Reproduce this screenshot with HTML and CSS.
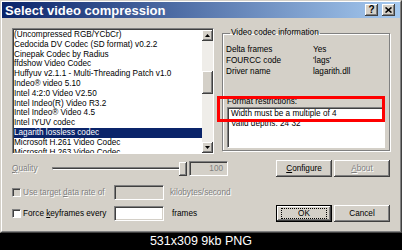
FILE: index.html
```html
<!DOCTYPE html>
<html lang="en">
<head>
  <meta charset="UTF-8" />
  <title>Select video compression</title>
  <link rel="stylesheet" href="styles.css">
</head>
<body>
  <div class="dialog">
    <div class="frame">
      <div class="titlebar">
        <span class="title">Select video compression</span>
        <span class="tbtn help">?</span>
        <span class="tbtn close">
          <svg width="7" height="6" viewBox="0 0 7 6"><path d="M0.5 0.5 L6.5 5.5 M6.5 0.5 L0.5 5.5" stroke="#000" stroke-width="1.6"/></svg>
        </span>
      </div>
      <div class="client">
        <div class="top">
          <div class="listbox">
            <ul class="items">
              <li>(Uncompressed RGB/YCbCr)</li>
              <li>Cedocida DV Codec (SD format) v0.2.2</li>
              <li>Cinepak Codec by Radius</li>
              <li>ffdshow Video Codec</li>
              <li>Huffyuv v2.1.1 - Multi-Threading Patch v1.0</li>
              <li>Indeo® video 5.10</li>
              <li>Intel 4:2:0 Video V2.50</li>
              <li>Intel Indeo(R) Video R3.2</li>
              <li>Intel Indeo® Video 4.5</li>
              <li>Intel IYUV codec</li>
              <li class="selected">Lagarith lossless codec</li>
              <li>Microsoft H.261 Video Codec</li>
              <li>Microsoft H.263 Video Codec</li>
            </ul>
            <div class="vscroll">
              <div class="sbtn">
                <svg width="5" height="3" viewBox="0 0 5 3"><polygon points="2.5,0 5,3 0,3" fill="#000"/></svg>
              </div>
              <div class="track"><div class="thumb"></div></div>
              <div class="sbtn">
                <svg width="5" height="3" viewBox="0 0 5 3"><polygon points="0,0 5,0 2.5,3" fill="#000"/></svg>
              </div>
            </div>
          </div>
          <fieldset class="group">
            <legend>Video codec information</legend>
            <div class="info">
              <span>Delta frames</span><span>Yes</span>
              <span>FOURCC code</span><span>'lags'</span>
              <span>Driver name</span><span>lagarith.dll</span>
            </div>
            <div class="restrict-label">Format restrictions:</div>
            <div class="restrict">
              <div>Width must be a multiple of 4</div>
              <div>Valid depths: 24 32</div>
            </div>
          </fieldset>
          <div class="highlight"></div>
        </div>

        <div class="row quality">
          <span class="label disabled"><u>Q</u>uality</span>
          <div class="slider">
            <div class="channel"></div>
            <div class="knob"></div>
          </div>
          <div class="edit small disabled-edit">100</div>
          <button class="btn push"><u>C</u>onfigure</button>
          <button class="btn off"><u>A</u>bout</button>
        </div>

        <div class="row rate">
          <span class="check disabled-check"></span>
          <span class="check-text disabled">Use target <u>d</u>ata rate of</span>
          <div class="edit disabled-edit"></div>
          <span class="unit disabled">kilobytes/second</span>
        </div>

        <div class="row keys">
          <span class="check"></span>
          <span class="check-text">Force <u>k</u>eyframes every</span>
          <div class="edit"></div>
          <span class="unit frames">frames</span>
          <button class="btn push default"><span class="focus">OK</span></button>
          <button class="btn">Cancel</button>
        </div>
      </div>
    </div>
  </div>
  <div class="caption">531x309 9kb PNG</div>
</body>
</html>
```

FILE: styles.css
```css
body {
  margin: 0;
  background: #000;
  font-family: "Liberation Sans", Arial, sans-serif;
  font-size: 8.2px;
  color: #000;
  overflow: hidden;
}
.dialog {
  width: 402px;
  height: 233px;
  box-sizing: border-box;
  background: #d4d0c8;
  border: 1px solid;
  border-color: #d4d0c8 #404040 #404040 #d4d0c8;
}
.frame {
  height: 100%;
  box-sizing: border-box;
  border: 1px solid;
  border-color: #fff #808080 #808080 #fff;
  display: flex;
  flex-direction: column;
}
.titlebar {
  height: 16px;
  flex: none;
  display: flex;
  align-items: center;
  padding: 0 5px 0 3px;
  background: linear-gradient(to right, #0a246a, #a6caf0);
  color: #fff;
}
.title {
  flex: 1;
  font-weight: bold;
  font-size: 13px;
  line-height: 16px;
  padding-top: 1px;
}
.tbtn {
  width: 13px;
  height: 12px;
  box-sizing: border-box;
  background: #d4d0c8;
  box-shadow: inset -1px -1px #404040, inset 1px 1px #fff, inset -2px -2px #808080;
  display: flex;
  align-items: center;
  justify-content: center;
  color: #000;
  font-weight: bold;
  font-size: 10px;
  line-height: 12px;
}
.tbtn.help { margin-right: 4px; }

.client {
  flex: 1;
  padding: 10px 10px 0 10px;
}
.top {
  display: flex;
  gap: 8px;
  height: 126px;
  position: relative;
}

/* list box */
.listbox {
  width: 202px;
  height: 126px;
  box-sizing: border-box;
  background: #fff;
  border: 1px solid;
  border-color: #808080 #fff #fff #808080;
  box-shadow: inset 1px 1px #404040;
  display: flex;
  overflow: hidden;
}
.items {
  list-style: none;
  margin: 0;
  padding: 1px 0 0 1px;
  flex: 1;
  overflow: hidden;
}
.items li {
  height: 9.8px;
  line-height: 9.8px;
  white-space: nowrap;
}
.items li.selected {
  background: #0a246a;
  color: #fff;
}
.vscroll {
  width: 11px;
  display: flex;
  flex-direction: column;
  padding-top: 1px;
}
.sbtn {
  height: 11px;
  flex: none;
  background: #d4d0c8;
  box-shadow: inset -1px -1px #404040, inset 1px 1px #fff, inset -2px -2px #808080;
  display: flex;
  align-items: center;
  justify-content: center;
}
.track {
  flex: 1;
  background: #efede9;
  position: relative;
}
.thumb {
  position: absolute;
  left: 0;
  right: 0;
  top: 30px;
  height: 23px;
  background: #d4d0c8;
  box-shadow: inset -1px -1px #404040, inset 1px 1px #fff, inset -2px -2px #808080;
}

/* group box */
.group {
  width: 168px;
  height: 123px;
  box-sizing: border-box;
  margin: 0;
  padding: 6px 4px 1px 3px;
  border: 1px solid #808080;
  box-shadow: inset 1px 1px #fff, 1px 1px #fff;
}
.group legend {
  padding: 0 1px;
  margin-left: 4px;
  line-height: 10px;
}
.info {
  display: grid;
  grid-template-columns: 87px 1fr;
  line-height: 11px;
}
.restrict-label {
  margin-top: 20px;
  line-height: 10px;
  padding-left: 1px;
}
.restrict {
  height: 41px;
  box-sizing: border-box;
  background: #fff;
  border: 1px solid;
  border-color: #808080 #fff #fff #808080;
  box-shadow: inset 1px 1px #404040;
  padding: 1px 0 0 3px;
  line-height: 10px;
  margin-left: 1px;
}
.highlight {
  position: absolute;
  left: 205px;
  top: 68px;
  width: 168px;
  height: 26px;
  box-sizing: border-box;
  border: 3px solid #f00;
}

/* rows */
.row {
  display: flex;
  align-items: center;
}
.quality { height: 17px; margin-top: 6px; }
.rate { height: 15px; margin-top: 8px; }
.keys { height: 17px; margin-top: 5px; }

.disabled {
  color: #808080;
  text-shadow: 1px 1px #fff;
}
.label { width: 40px; }
.slider {
  width: 135px;
  height: 17px;
  position: relative;
  display: flex;
  align-items: center;
}
.channel {
  flex: 1;
  height: 3px;
  box-sizing: border-box;
  border: 1px solid;
  border-color: #808080 #fff #fff #808080;
  background: #404040;
}
.knob {
  position: absolute;
  left: 127px;
  top: 2px;
  width: 8px;
  height: 14px;
  box-sizing: border-box;
  background: #d4d0c8;
  box-shadow: inset -1px -1px #404040, inset 1px 1px #fff, inset -2px -2px #808080;
}
.edit {
  width: 50px;
  height: 15px;
  box-sizing: border-box;
  background: #fff;
  border: 1px solid;
  border-color: #808080 #fff #fff #808080;
  box-shadow: inset 1px 1px #404040, inset -1px -1px #d4d0c8;
}
.edit.small {
  width: 39px;
  margin-left: 2px;
  text-align: right;
  padding-right: 4px;
  line-height: 13px;
  color: #808080;
}
.disabled-edit { background: #d4d0c8; }

.btn {
  width: 56px;
  height: 17px;
  box-sizing: border-box;
  border: none;
  padding: 0;
  font: inherit;
  color: #000;
  background: #d4d0c8;
  box-shadow: inset -1px -1px #404040, inset 1px 1px #fff, inset -2px -2px #808080;
  margin-left: 2px;
}
.btn.off {
  color: #808080;
  text-shadow: 1px 1px #fff;
}
.btn.push { margin-left: auto; }
.btn.default {
  border: 1px solid #000;
  display: flex;
  align-items: center;
  justify-content: center;
}
.focus {
  width: 44px;
  height: 9px;
  line-height: 9px;
  outline: 1px dotted #000;
}

.check {
  width: 9px;
  height: 9px;
  box-sizing: border-box;
  background: #fff;
  border: 1px solid;
  border-color: #808080 #fff #fff #808080;
  box-shadow: inset 1px 1px #404040;
}
.disabled-check { background: #d4d0c8; }
.check-text {
  width: 91px;
  margin-left: 2px;
}
.unit { margin-left: 6px; }
.unit.frames { margin-left: 8px; }

.caption {
  height: 17px;
  line-height: 17px;
  text-align: center;
  color: #fff;
  font-size: 12.5px;
}
```
